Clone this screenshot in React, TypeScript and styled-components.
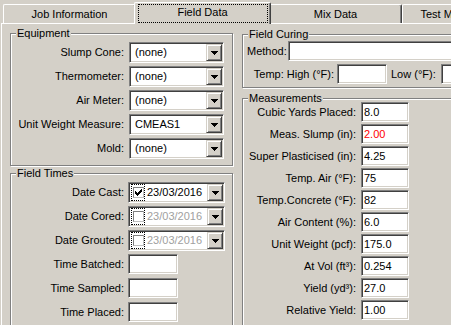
import { Fragment } from "react";
import styled, { createGlobalStyle, css } from "styled-components";

const GlobalStyle = createGlobalStyle`
  html, body {
    margin: 0;
    padding: 0;
    background: #d4d0c8;
  }
  body {
    font-family: "Liberation Sans", Arial, sans-serif;
    font-size: 11px;
    line-height: 13px;
    color: #000;
  }
  * {
    box-sizing: border-box;
  }
`;

// classic 3D edges
const sunken = css`
  border: 1px solid;
  border-color: #808080 #ffffff #ffffff #808080;
  box-shadow: inset 1px 1px 0 #404040, inset -1px -1px 0 #d4d0c8;
`;

const raised = css`
  border: 1px solid;
  border-color: #d4d0c8 #404040 #404040 #d4d0c8;
  box-shadow: inset 1px 1px 0 #ffffff, inset -1px -1px 0 #808080;
`;

const Window = styled.div`
  width: 451px;
  height: 325px;
  overflow: hidden;
  background: #d4d0c8;
`;

const TabStrip = styled.div`
  display: flex;
  align-items: flex-end;
  height: 23px;
  padding-left: 3px;
`;

const Tab = styled.div<{ $active?: boolean }>`
  position: relative;
  flex: none;
  width: 133px;
  height: 19px;
  display: flex;
  align-items: center;
  justify-content: center;
  background: #d4d0c8;
  border-top: 1px solid #ffffff;
  border-left: 1px solid #ffffff;
  border-right: 1px solid #404040;
  box-shadow: inset -1px 0 0 #808080;
  border-radius: 2px 2px 0 0;
  white-space: nowrap;

  ${(p) =>
    p.$active &&
    css`
      width: 137px;
      height: 22px;
      margin: 0 -2px -1px;
      padding-bottom: 2px;
      z-index: 1;

      &::after {
        content: "";
        position: absolute;
        inset: 1px 2px 1px 3px;
        border: 1px dotted #000;
      }
    `}
`;

const Panel = styled.div`
  display: flex;
  gap: 9px;
  margin-left: 1px;
  padding: 9px 0 0 8px;
  border-top: 1px solid #ffffff;
  border-left: 1px solid #ffffff;
`;

const Column = styled.div<{ $width: number; $gap: number; $top?: number }>`
  flex: none;
  display: flex;
  flex-direction: column;
  width: ${(p) => p.$width}px;
  gap: ${(p) => p.$gap}px;
  margin-top: ${(p) => p.$top ?? 0}px;
`;

const Group = styled.div`
  position: relative;
  border: 1px solid #808080;
  box-shadow: inset 1px 1px 0 #ffffff, 1px 1px 0 #ffffff;
`;

const Caption = styled.span`
  position: absolute;
  top: -7px;
  left: 5px;
  padding: 0 1px;
  background: #d4d0c8;
  white-space: nowrap;
`;

const FormGrid = styled.div<{ $cols: string; $colGap: number; $rowGap: number; $row: number; $pad: string }>`
  display: grid;
  grid-template-columns: ${(p) => p.$cols};
  grid-auto-rows: ${(p) => p.$row}px;
  column-gap: ${(p) => p.$colGap}px;
  row-gap: ${(p) => p.$rowGap}px;
  padding: ${(p) => p.$pad};
`;

const Label = styled.span`
  align-self: center;
  text-align: right;
  white-space: nowrap;
`;

const Combo = styled.div`
  ${sunken};
  display: flex;
  align-items: stretch;
  height: 21px;
  padding: 1px;
  background: #ffffff;
`;

const DateCombo = styled(Combo)`
  width: 97px;
`;

const ComboText = styled.span<{ $muted?: boolean }>`
  flex: 1;
  display: flex;
  align-items: center;
  padding-left: 4px;
  white-space: nowrap;
  overflow: hidden;
  color: ${(p) => (p.$muted ? "#a0a0a0" : "#000")};
`;

const DateText = styled(ComboText)`
  padding-left: 2px;
`;

const DropButton = styled.span`
  ${raised};
  flex: none;
  width: 16px;
  display: flex;
  align-items: center;
  justify-content: center;
  background: #d4d0c8;
`;

const FocusBox = styled.span`
  flex: none;
  width: 14px;
  margin-left: 1px;
  display: flex;
  align-items: center;
  justify-content: center;
  border: 1px dotted #000;
`;

const CheckBox = styled.span`
  width: 11px;
  height: 11px;
  display: flex;
  align-items: center;
  justify-content: center;
  background: #ffffff;
  border: 1px solid;
  border-color: #808080 #c0c0c0 #c0c0c0 #808080;
`;

const TextBox = styled.div<{ $w?: number; $red?: boolean; $ml?: number }>`
  ${sunken};
  flex: none;
  height: 20px;
  width: ${(p) => (p.$w ? `${p.$w}px` : "auto")};
  margin-left: ${(p) => p.$ml ?? 0}px;
  display: flex;
  align-items: center;
  padding-left: 2px;
  background: #ffffff;
  color: ${(p) => (p.$red ? "#ff0000" : "#000")};
  white-space: nowrap;
`;

const TimeBox = styled(TextBox)`
  width: 50px;
`;

const CuringBody = styled.div`
  display: flex;
  flex-direction: column;
  gap: 3px;
  padding: 6px 0 3px 4px;
`;

const Row = styled.div`
  display: flex;
  align-items: center;
`;

const RowLabel = styled.span<{ $w: number; $right?: boolean; $ml?: number }>`
  flex: none;
  width: ${(p) => p.$w}px;
  margin-left: ${(p) => p.$ml ?? 0}px;
  text-align: ${(p) => (p.$right ? "right" : "left")};
  white-space: nowrap;
`;

function Arrow() {
  return (
    <svg width="7" height="4" viewBox="0 0 7 4" shapeRendering="crispEdges">
      <path d="M0 0h7v1H0zM1 1h5v1H1zM2 2h3v1H2zM3 3h1v1H3z" fill="#000" />
    </svg>
  );
}

function Tick() {
  return (
    <svg width="7" height="7" viewBox="0 0 7 7" shapeRendering="crispEdges">
      <path d="M0 2h1v3H0zM1 3h1v3H1zM2 4h1v3H2zM3 3h1v3H3zM4 2h1v3H4zM5 1h1v3H5zM6 0h1v3H6z" fill="#000" />
    </svg>
  );
}

function Dropdown({ value }: { value: string }) {
  return (
    <Combo>
      <ComboText>{value}</ComboText>
      <DropButton>
        <Arrow />
      </DropButton>
    </Combo>
  );
}

function DatePicker({ checked }: { checked?: boolean }) {
  return (
    <DateCombo>
      <FocusBox>
        <CheckBox>{checked && <Tick />}</CheckBox>
      </FocusBox>
      <DateText $muted={!checked}>23/03/2016</DateText>
      <DropButton>
        <Arrow />
      </DropButton>
    </DateCombo>
  );
}

const equipment = [
  ["Slump Cone:", "(none)"],
  ["Thermometer:", "(none)"],
  ["Air Meter:", "(none)"],
  ["Unit Weight Measure:", "CMEAS1"],
  ["Mold:", "(none)"],
];

const measurements: { label: string; value: string; red?: boolean }[] = [
  { label: "Cubic Yards Placed:", value: "8.0" },
  { label: "Meas. Slump (in):", value: "2.00", red: true },
  { label: "Super Plasticised (in):", value: "4.25" },
  { label: "Temp. Air (°F):", value: "75" },
  { label: "Temp.Concrete (°F):", value: "82" },
  { label: "Air Content (%):", value: "6.0" },
  { label: "Unit Weight (pcf):", value: "175.0" },
  { label: "At Vol (ft³):", value: "0.254" },
  { label: "Yield (yd³):", value: "27.0" },
  { label: "Relative Yield:", value: "1.00" },
];

export default function App() {
  return (
    <Window>
      <GlobalStyle />
      <TabStrip>
        <Tab>Job Information</Tab>
        <Tab $active>Field Data</Tab>
        <Tab>Mix Data</Tab>
        <Tab>Test Measurements</Tab>
      </TabStrip>

      <Panel>
        <Column $width={223} $gap={7}>
          <Group>
            <Caption>Equipment</Caption>
            <FormGrid $cols="1fr 95px" $colGap={5} $rowGap={3} $row={21} $pad="8px 8px 6px 4px">
              {equipment.map(([label, value]) => (
                <Fragment key={label}>
                  <Label>{label}</Label>
                  <Dropdown value={value} />
                </Fragment>
              ))}
            </FormGrid>
          </Group>

          <Group>
            <Caption>Field Times</Caption>
            <FormGrid $cols="1fr 97px" $colGap={4} $rowGap={3} $row={21} $pad="8px 7px 20px 4px">
              <Label>Date Cast:</Label>
              <DatePicker checked />
              <Label>Date Cored:</Label>
              <DatePicker />
              <Label>Date Grouted:</Label>
              <DatePicker />
              <Label>Time Batched:</Label>
              <TimeBox />
              <Label>Time Sampled:</Label>
              <TimeBox />
              <Label>Time Placed:</Label>
              <TimeBox />
            </FormGrid>
          </Group>
        </Column>

        <Column $width={260} $gap={10} $top={1}>
          <Group>
            <Caption>Field Curing</Caption>
            <CuringBody>
              <Row>
                <RowLabel $w={41}>Method:</RowLabel>
                <TextBox $w={200} />
              </Row>
              <Row>
                <RowLabel $w={87} $right>Temp: High (°F):</RowLabel>
                <TextBox $w={50} $ml={3} />
                <RowLabel $w={50} $ml={4}>Low (°F):</RowLabel>
                <TextBox $w={60} />
              </Row>
            </CuringBody>
          </Group>

          <Group>
            <Caption>Measurements</Caption>
            <FormGrid $cols="113px 48px" $colGap={5} $rowGap={2} $row={20} $pad="3px 0 10px 0">
              {measurements.map((m) => (
                <Fragment key={m.label}>
                  <Label>{m.label}</Label>
                  <TextBox $red={m.red}>{m.value}</TextBox>
                </Fragment>
              ))}
            </FormGrid>
          </Group>
        </Column>
      </Panel>
    </Window>
  );
}
